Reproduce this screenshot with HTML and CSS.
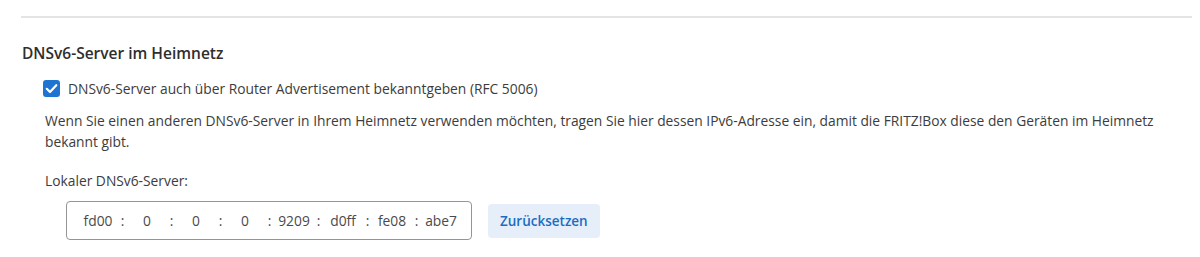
FILE: index.html
```html
<!DOCTYPE html>
<html lang="de">

<head>
    <meta charset="UTF-8">
    <meta name="viewport" content="width=device-width, initial-scale=1.0">
    <title>Heimnetz</title>
    <link rel="stylesheet" href="styles.css">
</head>

<body>
    <div class="page">
        <hr class="divider">

        <section class="section">
            <h2 class="section-title">DNSv6-Server im Heimnetz</h2>

            <div class="section-body">
                <label class="check-row">
                    <input type="checkbox" class="check-input" checked>
                    <span class="check-box">
                        <svg width="17" height="17" viewBox="0 0 17 17">
                            <path d="M3.8 8.8 L7 12 L13.3 5.2" fill="none" stroke="#fff" stroke-width="2.2"
                                stroke-linecap="round" stroke-linejoin="round" />
                        </svg>
                    </span>
                    <span>DNSv6-Server auch über Router Advertisement bekanntgeben (RFC 5006)</span>
                </label>

                <p class="hint">Wenn Sie einen anderen DNSv6-Server in Ihrem Heimnetz verwenden möchten, tragen Sie hier
                    dessen IPv6-Adresse ein, damit die FRITZ!Box diese den Geräten im Heimnetz bekannt gibt.</p>

                <p class="field-label">Lokaler DNSv6-Server:</p>

                <div class="field-row">
                    <div class="ipv6">
                        <input class="ipv6-part" type="text" value="fd00">
                        <span class="ipv6-sep">:</span>
                        <input class="ipv6-part" type="text" value="0">
                        <span class="ipv6-sep">:</span>
                        <input class="ipv6-part" type="text" value="0">
                        <span class="ipv6-sep">:</span>
                        <input class="ipv6-part" type="text" value="0">
                        <span class="ipv6-sep">:</span>
                        <input class="ipv6-part" type="text" value="9209">
                        <span class="ipv6-sep">:</span>
                        <input class="ipv6-part" type="text" value="d0ff">
                        <span class="ipv6-sep">:</span>
                        <input class="ipv6-part" type="text" value="fe08">
                        <span class="ipv6-sep">:</span>
                        <input class="ipv6-part" type="text" value="abe7">
                    </div>
                    <button class="reset-btn" type="button">Zurücksetzen</button>
                </div>
            </div>
        </section>
    </div>
</body>

</html>
```
FILE: styles.css
```css
body {
    margin: 0;
    background-color: #fff;
    color: #3c3c3c;
    font-family: "Open Sans", sans-serif;
    font-size: 13.8px;
    line-height: 21px;
}

.page {
    padding: 16px 8px 0 21px;
}

.divider {
    margin: 0;
    border: none;
    border-top: 2px solid #e4e4e4;
    height: 0;
}

.section {
    padding-top: 25px;
}

.section-title {
    margin: 0 0 0 1px;
    font-size: 15.5px;
    font-weight: 600;
    line-height: 20px;
    color: #2e2e2e;
}

.section-body {
    padding-left: 24px;
    padding-top: 15px;
}

.check-row {
    display: flex;
    align-items: center;
    gap: 8px;
    margin-left: -2px;
    height: 20px;
    cursor: pointer;
}

.check-input {
    display: none;
}

.check-box {
    display: flex;
    width: 17px;
    height: 17px;
    border-radius: 3px;
    background-color: #1f74d2;
}

.hint {
    margin: 12px 0 0;
}

.field-label {
    margin: 18px 0 0;
}

.field-row {
    display: flex;
    align-items: center;
    gap: 16px;
    margin: 10px 0 0 21px;
}

.ipv6 {
    display: flex;
    align-items: center;
    height: 37px;
    padding: 0 10px 0 11px;
    border: 1px solid #959595;
    border-radius: 4px;
}

.ipv6-part {
    width: 40px;
    padding: 0;
    border: none;
    outline: none;
    background: transparent;
    font: inherit;
    color: #4a4a4a;
    text-align: center;
}

.ipv6-sep {
    width: 9px;
    text-align: center;
    color: #4a4a4a;
}

.reset-btn {
    height: 34px;
    padding: 0 12px;
    border: none;
    border-radius: 4px;
    background-color: #e6eff9;
    color: #1d6cc2;
    font-family: inherit;
    font-size: 13.5px;
    font-weight: 600;
    cursor: pointer;
}
```
